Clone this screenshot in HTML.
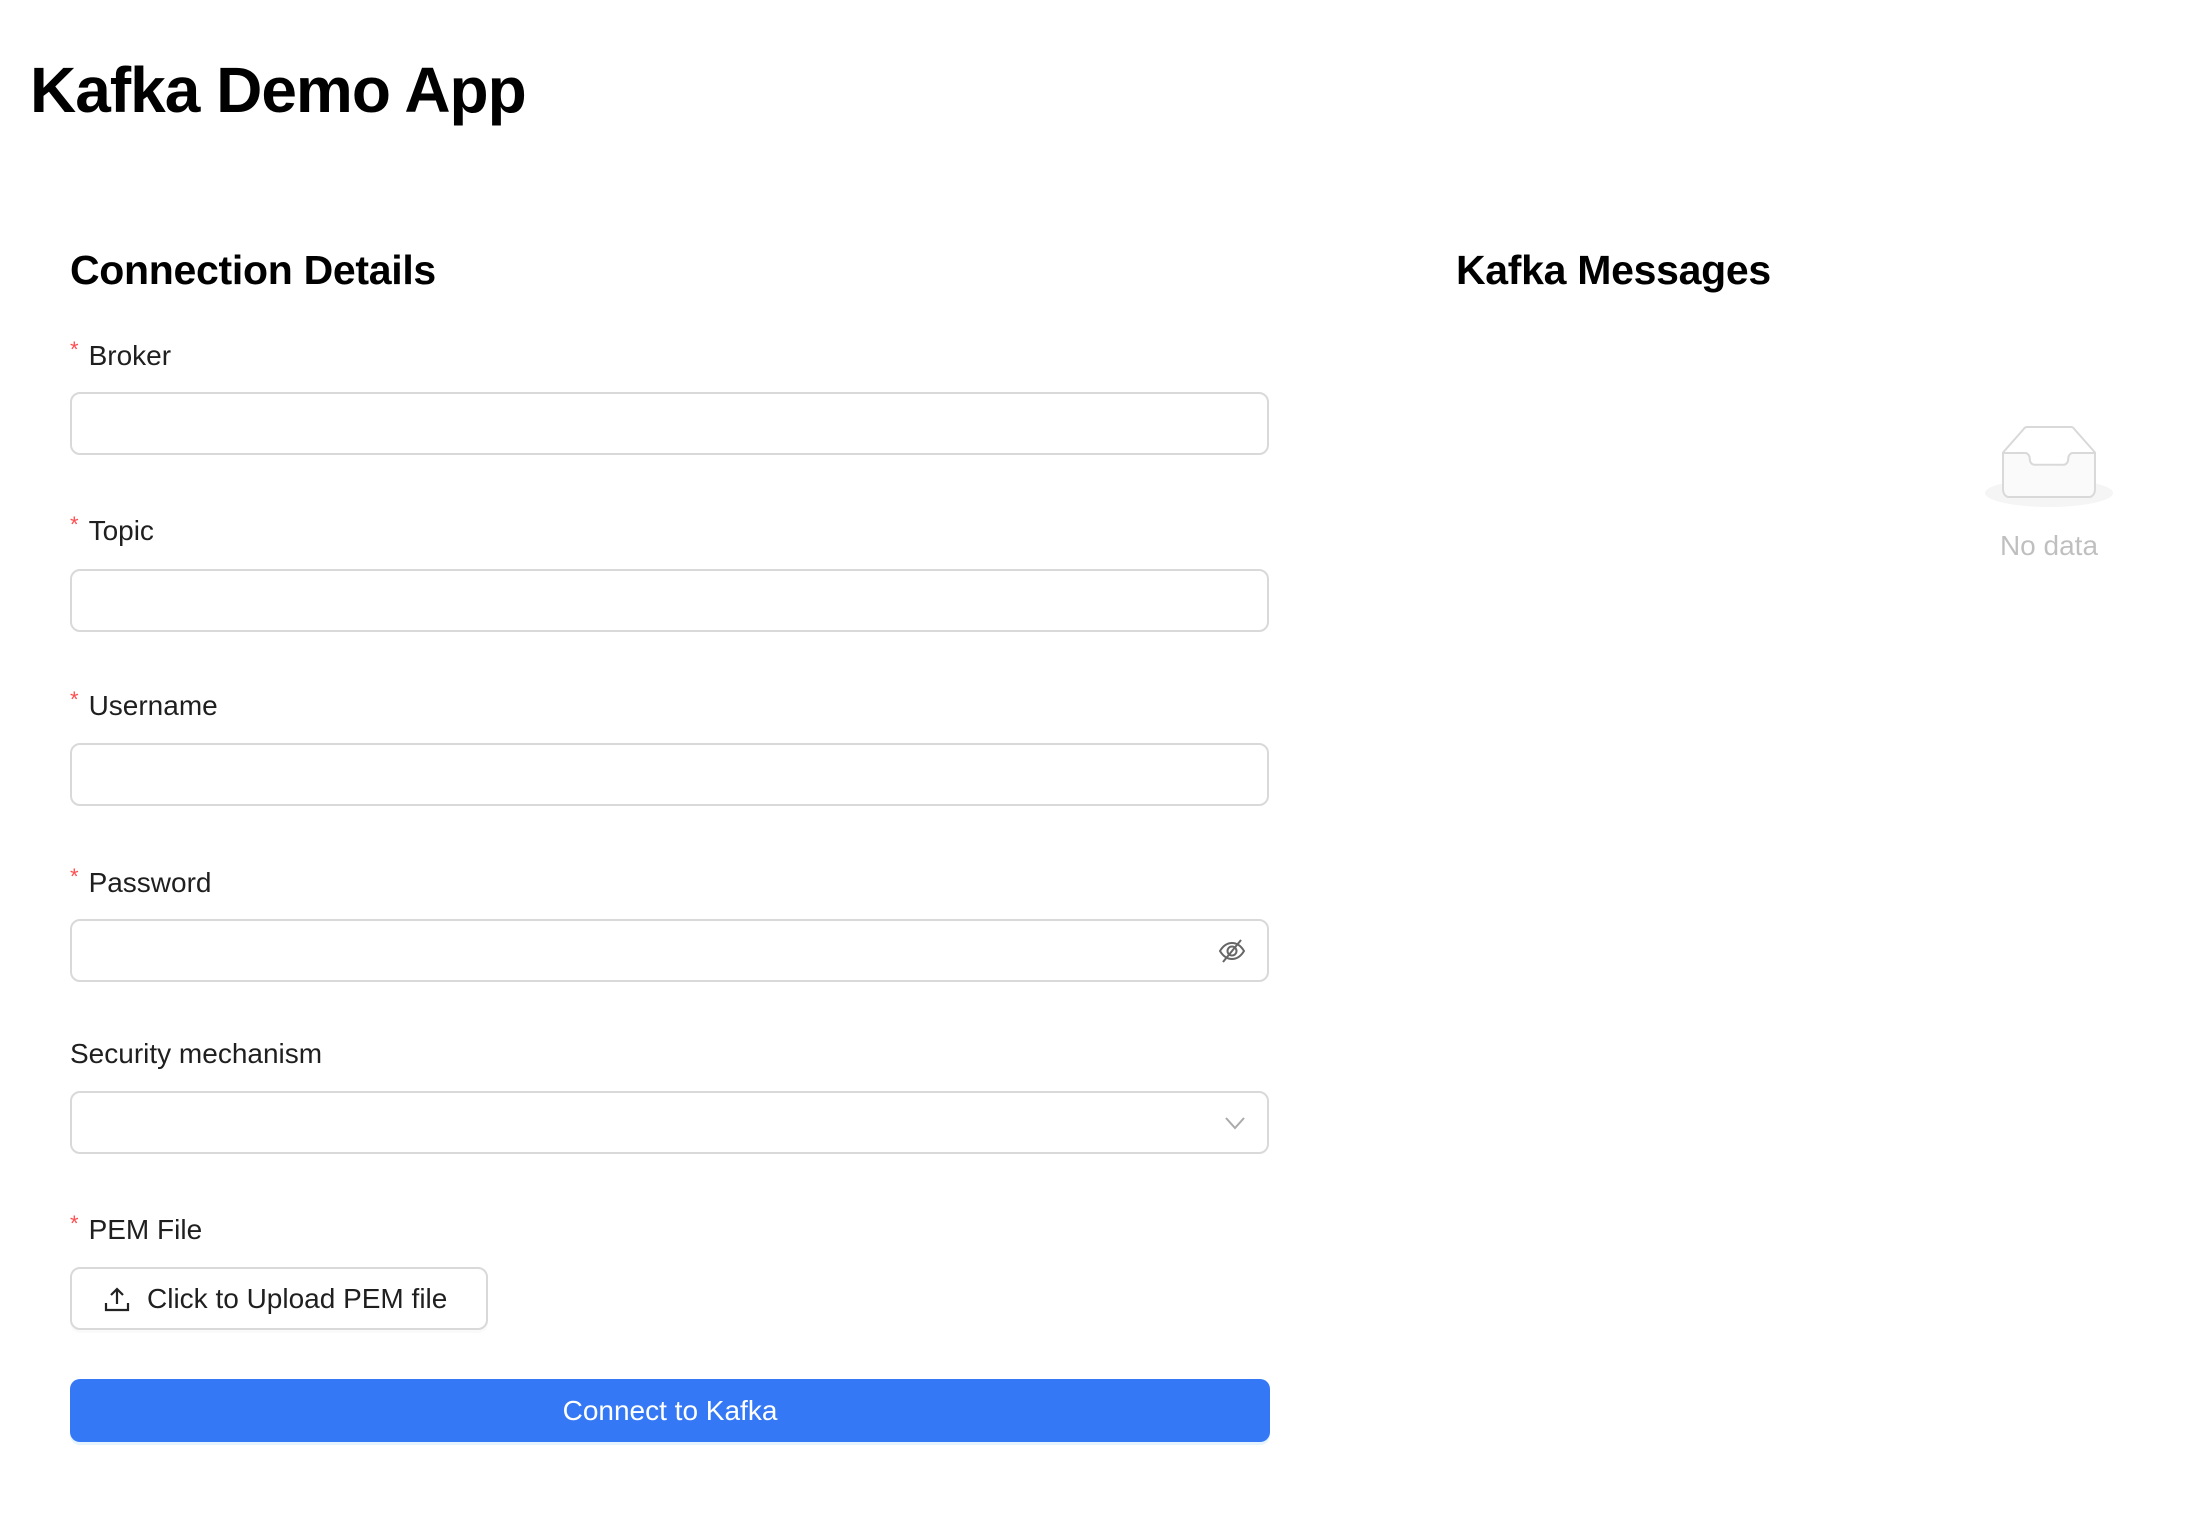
<!DOCTYPE html>
<html><head><meta charset="utf-8">
<style>
*{box-sizing:border-box;margin:0;padding:0}
body{width:2196px;height:1526px;background:#fff;font-family:"Liberation Sans",sans-serif;color:rgba(0,0,0,0.88);position:relative;overflow:hidden}
.a{position:absolute}
h1{position:absolute;left:30px;top:52px;font-size:64px;font-weight:bold;color:#000;letter-spacing:-1px;line-height:76px}
h2{position:absolute;font-size:41px;font-weight:bold;color:#000;letter-spacing:-0.3px;line-height:50px}
.lbl{position:absolute;left:70px;font-size:28px;line-height:32px}
.lbl .s{color:#ff4d4f;font-size:22px;position:relative;top:-8px;margin-right:10px}
.inp{position:absolute;left:70px;width:1206px;height:63px;border:2px solid #d9d9d9;border-radius:10px;background:#fff}
</style></head><body>
<h1>Kafka Demo App</h1>
<h2 style="left:70px;top:245px">Connection Details</h2>
<h2 style="left:1456px;top:245px">Kafka Messages</h2>

<div class="lbl" style="top:340px"><span class="s">*</span>Broker</div>
<div class="inp" style="top:392px;width:1199px"></div>
<div class="lbl" style="top:515px"><span class="s">*</span>Topic</div>
<div class="inp" style="top:569px;width:1199px"></div>
<div class="lbl" style="top:690px"><span class="s">*</span>Username</div>
<div class="inp" style="top:743px;width:1199px"></div>
<div class="lbl" style="top:867px"><span class="s">*</span>Password</div>
<div class="inp" style="top:919px;width:1199px">
<svg class="a" style="left:1146px;top:16px" width="28" height="28" viewBox="0 0 28 28" fill="none" stroke="#666" stroke-width="2"><path d="M2 14c3-5 7-8 12-8s9 3 12 8c-3 5-7 8-12 8S5 19 2 14z"/><circle cx="14" cy="14" r="4.5"/><path d="M23 3L5 25"/></svg>
</div>
<div class="lbl" style="top:1038px">Security mechanism</div>
<div class="inp" style="top:1091px;width:1199px">
<svg class="a" style="left:1152px;top:22px" width="22" height="16" viewBox="0 0 22 16" fill="none" stroke="#aaa" stroke-width="2"><path d="M2 3l9 10 9-10"/></svg>
</div>
<div class="lbl" style="top:1214px"><span class="s">*</span>PEM File</div>
<div class="a" style="left:70px;top:1267px;width:418px;height:63px;border:2px solid #d9d9d9;border-radius:10px;box-shadow:0 3px 0 rgba(0,0,0,0.02);font-size:28px;line-height:59px;padding-left:75px">Click to Upload PEM file
<svg class="a" style="left:32px;top:17px" width="26" height="26" viewBox="0 0 26 26" fill="none" stroke="#222" stroke-width="2.2"><path d="M13 3v15M7 9l6-6 6 6M2 17v7h22v-7"/></svg>
</div>
<div class="a" style="left:70px;top:1379px;width:1200px;height:63px;background:#3478f6;border-radius:10px;color:#fff;font-size:28px;line-height:63px;text-align:center;box-shadow:0 3px 0 rgba(5,145,255,0.1)">Connect to Kafka</div>

<svg class="a" style="left:1985px;top:425px" width="128" height="82" viewBox="0 0 64 41"><g transform="translate(0 1)" fill="none" fill-rule="evenodd"><ellipse fill="#f5f5f5" cx="32" cy="33" rx="32" ry="7"/><g fill-rule="nonzero" stroke="#d9d9d9"><path d="M55 12.76L44.854 1.258C44.367.474 43.656 0 42.907 0H21.093c-.749 0-1.46.474-1.947 1.257L9 12.761V22h46v-9.24z"/><path d="M41.613 15.931c0-1.605.994-2.93 2.227-2.931H55v18.137C55 33.26 53.68 35 52.05 35h-40.1C10.32 35 9 33.259 9 31.137V13h11.16c1.233 0 2.227 1.323 2.227 2.928v.022c0 1.605 1.005 2.901 2.237 2.901h14.752c1.232 0 2.237-1.308 2.237-2.913v-.007z" fill="#fafafa"/></g></g></svg>
<div class="a" style="left:1949px;top:530px;width:200px;text-align:center;font-size:28px;color:rgba(0,0,0,0.25)">No data</div>
</body></html>
